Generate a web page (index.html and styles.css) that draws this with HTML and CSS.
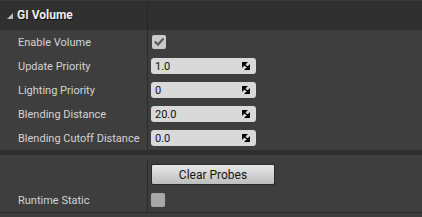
FILE: index.html
```html
<!DOCTYPE html>
<html>
<head>
<meta charset="utf-8">
<link rel="stylesheet" href="styles.css">
</head>
<body>
<div class="panel">
  <div class="header">
    <div class="hname"><span class="tri"></span><span class="htitle">GI Volume</span></div>
    <div class="hval"></div>
  </div>
  <div class="section">
    <div class="row">
      <div class="name">Enable Volume</div>
      <div class="val"><span class="check on"><svg width="14" height="14" viewBox="0 0 14 14"><path d="M3.5 7.2 L6 9.6 L10.8 4.4" fill="none" stroke="#5c5c5c" stroke-width="2.2" stroke-linecap="square"/></svg></span></div>
    </div>
    <div class="row">
      <div class="name">Update Priority</div>
      <div class="val"><div class="num"><span>1.0</span><svg class="spin" width="8" height="8" viewBox="0 0 8 8"><path d="M0 0 H5 L0 5 Z M8 3 V8 H3 Z M1.5 1.5 L6.5 6.5" fill="#000" stroke="#000" stroke-width="1.4"/></svg></div></div>
    </div>
    <div class="row">
      <div class="name">Lighting Priority</div>
      <div class="val"><div class="num"><span>0</span><svg class="spin" width="8" height="8" viewBox="0 0 8 8"><path d="M0 0 H5 L0 5 Z M8 3 V8 H3 Z M1.5 1.5 L6.5 6.5" fill="#000" stroke="#000" stroke-width="1.4"/></svg></div></div>
    </div>
    <div class="row">
      <div class="name">Blending Distance</div>
      <div class="val"><div class="num"><span>20.0</span><svg class="spin" width="8" height="8" viewBox="0 0 8 8"><path d="M0 0 H5 L0 5 Z M8 3 V8 H3 Z M1.5 1.5 L6.5 6.5" fill="#000" stroke="#000" stroke-width="1.4"/></svg></div></div>
    </div>
    <div class="row">
      <div class="name">Blending Cutoff Distance</div>
      <div class="val"><div class="num"><span>0.0</span><svg class="spin" width="8" height="8" viewBox="0 0 8 8"><path d="M0 0 H5 L0 5 Z M8 3 V8 H3 Z M1.5 1.5 L6.5 6.5" fill="#000" stroke="#000" stroke-width="1.4"/></svg></div></div>
    </div>
  </div>
  <div class="sep"></div>
  <div class="section second">
    <div class="row btnrow">
      <div class="name"></div>
      <div class="val"><button class="btn">Clear Probes</button></div>
    </div>
    <div class="row">
      <div class="name">Runtime Static</div>
      <div class="val"><span class="check off"></span></div>
    </div>
  </div>
  <div class="foot"></div>
</div>
</body>
</html>
```

FILE: styles.css
```css
html, body {
  margin: 0;
  padding: 0;
  background: #3d3d3d;
}
body {
  font-family: Roboto, "Liberation Sans", sans-serif;
  width: 422px;
  height: 217px;
  overflow: hidden;
}
.panel {
  padding-top: 1px;
  background: #393939;
}
.header {
  display: flex;
  height: 29px;
  background: #303030;
}
.hname {
  width: 147px;
  border-right: 1px solid #262626;
  display: flex;
  align-items: center;
}
.tri {
  width: 0;
  height: 0;
  margin-left: 7px;
  margin-right: 4px;
  margin-top: 1px;
  border-left: 6px solid transparent;
  border-bottom: 6px solid #b8b8b8;
}
.htitle {
  font-weight: bold;
  font-size: 12px;
  color: #eeeeee;
  text-shadow: 1px 1px 0 #111;
  padding-bottom: 1px;
}
.hval { flex: 1; }
.section {
  background: #3e3e3e;
}
.row {
  display: flex;
  height: 24px;
}
.name {
  width: 129px;
  padding-left: 18px;
  border-right: 1px solid #2a2a2a;
  display: flex;
  align-items: center;
  font-size: 11px;
  color: #d4d4d4;
  white-space: nowrap;
}
.val {
  flex: 1;
  display: flex;
  align-items: center;
  padding-left: 3px;
}
.num {
  width: 105px;
  height: 16px;
  box-sizing: border-box;
  background: #d9d9d9;
  border-radius: 3px;
  display: flex;
  align-items: center;
  justify-content: space-between;
  padding: 0 6px 0 4px;
  font-size: 11px;
  color: #111;
}
.spin { display: block; }
.check {
  display: block;
  width: 14px;
  height: 14px;
  border-radius: 2px;
  margin-left: 1px;
}
.check svg { display: block; }
.check.on { background: #cbcbcb; }
.check.off { background: #a8a8a8; }
.sep {
  height: 5px;
  background: #2e2e2e;
}
.second {
  padding-top: 5px;
}
.second .name {
  border-right: none;
}
.second .row {
  border-left: none;
}
.second .row .name {
  box-shadow: 1px 0 0 #2a2a2a;
}
.btnrow {
  height: 28px;
}
.btnrow .val {
  align-items: flex-start;
  padding-top: 4px;
}
.btn {
  width: 124px;
  height: 21px;
  margin: 0 0 0 1px;
  padding: 0;
  border: 1px solid #2a2a2a;
  border-radius: 2px;
  background: linear-gradient(#e8e8e8, #bdbdbd);
  font-family: Roboto, "Liberation Sans", sans-serif;
  font-size: 12px;
  color: #151515;
}
.foot {
  height: 1px;
  background: #262626;
}
```
